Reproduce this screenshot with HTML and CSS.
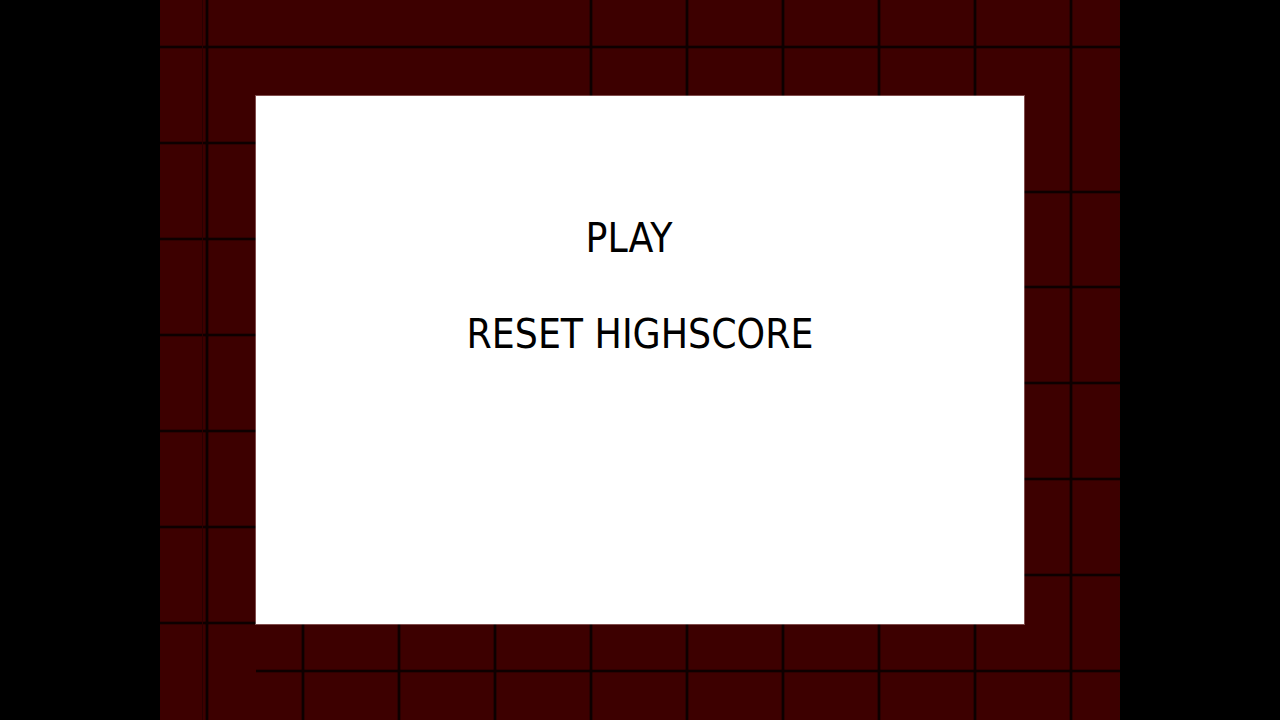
FILE: index.html
```html
<!DOCTYPE html>
<html lang="en">
<head>
<meta charset="utf-8">
<title>Snake</title>
<link rel="stylesheet" href="styles.css">
</head>
<body>
<main class="stage">
  <div class="board">
    <svg class="tiles" width="960" height="720" viewBox="0 0 960 720" aria-hidden="true">
      <defs>
        <filter id="soft" x="-5%" y="-5%" width="110%" height="110%">
          <feGaussianBlur stdDeviation="0.7"/>
        </filter>
      </defs>
      <rect width="960" height="720" fill="#3d0000"/>
      <g stroke="#0e0000" stroke-width="2.6" filter="url(#soft)">
        <!-- top band -->
        <line x1="0" y1="47" x2="960" y2="47"/>
        <line x1="431" y1="0" x2="431" y2="96"/>
        <line x1="527" y1="0" x2="527" y2="96"/>
        <line x1="623" y1="0" x2="623" y2="96"/>
        <line x1="719" y1="0" x2="719" y2="96"/>
        <line x1="815" y1="0" x2="815" y2="96"/>
        <!-- left column -->
        <line x1="47" y1="0" x2="47" y2="720"/>
        <line x1="0" y1="143" x2="96" y2="143"/>
        <line x1="0" y1="239" x2="96" y2="239"/>
        <line x1="0" y1="335" x2="96" y2="335"/>
        <line x1="0" y1="431" x2="96" y2="431"/>
        <line x1="0" y1="527" x2="96" y2="527"/>
        <line x1="0" y1="623" x2="96" y2="623"/>
        <!-- right column -->
        <line x1="911" y1="0" x2="911" y2="720"/>
        <line x1="864" y1="192" x2="960" y2="192"/>
        <line x1="864" y1="287" x2="960" y2="287"/>
        <line x1="864" y1="383" x2="960" y2="383"/>
        <line x1="864" y1="479" x2="960" y2="479"/>
        <line x1="864" y1="575" x2="960" y2="575"/>
        <!-- bottom band -->
        <line x1="96" y1="671" x2="960" y2="671"/>
        <line x1="143" y1="624" x2="143" y2="720"/>
        <line x1="239" y1="624" x2="239" y2="720"/>
        <line x1="335" y1="624" x2="335" y2="720"/>
        <line x1="431" y1="624" x2="431" y2="720"/>
        <line x1="527" y1="624" x2="527" y2="720"/>
        <line x1="623" y1="624" x2="623" y2="720"/>
        <line x1="719" y1="624" x2="719" y2="720"/>
        <line x1="815" y1="624" x2="815" y2="720"/>
      </g>
      <line x1="42.5" y1="0" x2="42.5" y2="720" stroke="#2a0000" stroke-width="1"/>
    </svg>
    <nav class="menu">
      <div class="menu-item menu-item--play">PLAY</div>
      <div class="menu-item">RESET HIGHSCORE</div>
    </nav>
  </div>
</main>
</body>
</html>
```

FILE: styles.css
```css
html, body {
  margin: 0;
  padding: 0;
  background: #000;
}

.stage {
  width: 1280px;
  height: 720px;
  display: flex;
  justify-content: center;
  overflow: hidden;
}

.board {
  width: 960px;
  height: 720px;
  display: grid;
  grid-template: 720px / 960px;
}

.tiles {
  grid-area: 1 / 1;
  display: block;
}

.menu {
  grid-area: 1 / 1;
  align-self: start;
  justify-self: start;
  margin: 96px 0 0 96px;
  width: 768px;
  height: 528px;
  box-sizing: border-box;
  padding-top: 94px;
  background: #fff;
  box-shadow: 0 0 0 1px rgba(255, 220, 220, 0.35);
  font-family: "DejaVu Sans Condensed", "DejaVu Sans", sans-serif;
  font-stretch: condensed;
  font-size: 40.4px;
  line-height: 96px;
  color: #000;
  text-align: center;
}

.menu-item--play {
  padding-right: 22px;
}
```
